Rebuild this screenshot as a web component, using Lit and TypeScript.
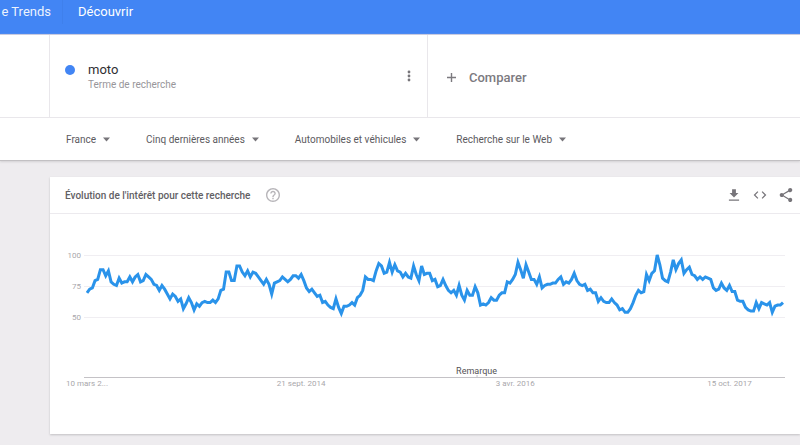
import { LitElement, html, css, svg } from "lit";
import { customElement } from "lit/decorators.js";

// Weekly interest values over five years.
const WEEKS = [
  69, 72, 73, 79, 80, 88, 88, 83, 87, 78, 76, 75, 81, 77, 78, 78, 82, 78, 82, 84,
  78, 79, 84, 82, 80, 76, 75, 71, 75, 72, 68, 64, 68, 66, 62, 64, 56, 60, 65, 61,
  55, 60, 58, 61, 62, 61, 61, 63, 61, 64, 71, 72, 86, 86, 79, 79, 91, 91, 86, 83,
  87, 82, 86, 85, 82, 79, 76, 80, 76, 68, 77, 78, 79, 82, 80, 78, 80, 83, 83, 81,
  84, 79, 73, 70, 72, 69, 66, 67, 61, 62, 59, 57, 56, 64, 57, 52, 58, 58, 59, 61,
  59, 65, 67, 71, 82, 80, 80, 79, 87, 93, 91, 85, 86, 94, 86, 92, 87, 86, 82, 85,
  82, 81, 91, 84, 79, 91, 84, 85, 85, 79, 80, 74, 75, 80, 75, 71, 69, 71, 67, 75,
  67, 63, 71, 67, 67, 74, 69, 59, 60, 59, 61, 65, 63, 63, 67, 69, 69, 78, 77, 80,
  84, 94, 88, 81, 92, 86, 80, 80, 76, 82, 73, 75, 76, 76, 77, 77, 80, 82, 76, 78,
  77, 80, 85, 79, 76, 75, 76, 71, 72, 69, 69, 62, 65, 62, 61, 61, 64, 61, 59, 55,
  56, 53, 53, 56, 61, 67, 71, 69, 70, 84, 79, 85, 87, 100, 92, 81, 79, 78, 86, 96,
  88, 93, 96, 85, 88, 90, 84, 83, 80, 82, 80, 82, 81, 80, 73, 71, 72, 77, 73, 71,
  75, 70, 70, 63, 62, 62, 57, 55, 54, 54, 61, 56, 61, 60, 59, 61, 53, 58, 59, 59,
  61,
];

const LAST = WEEKS.length - 1;
const DATES = [
  { week: 0, label: "10 mars 2..." },
  { week: 80, label: "21 sept. 2014" },
  { week: 160, label: "3 avr. 2016" },
  { week: 240, label: "15 oct. 2017" },
];
const FILTERS = [
  { key: "geo", label: "France" },
  { key: "time", label: "Cinq dernières années" },
  { key: "cat", label: "Automobiles et véhicules" },
  { key: "prop", label: "Recherche sur le Web" },
];

@customElement("trend-chart")
export class TrendChart extends LitElement {
  static styles = css`
    :host {
      display: block;
      padding: 41px 15px 0 34px;
      color: #a9a7ab;
      font-size: 8px;
      line-height: 12px;
    }
    .plot {
      position: relative;
      height: 122px;
      border-bottom: 1px solid #c4c2c6;
    }
    .row {
      position: relative;
      height: 30px;
      border-top: 1px solid #f0eef2;
    }
    .value {
      position: absolute;
      right: 100%;
      top: -6px;
      padding-right: 3px;
    }
    .line {
      position: absolute;
      top: 0;
      left: 3px;
      width: calc(100% - 5px);
      height: 122px;
      overflow: visible;
    }
    .line polyline {
      fill: none;
      stroke: #2a93ea;
      stroke-width: 3;
      vector-effect: non-scaling-stroke;
    }
    .note {
      position: absolute;
      left: 56%;
      bottom: 0;
      transform: translateX(-50%);
      color: #545256;
      font-size: 9px;
    }
    .note::after {
      content: "";
      position: absolute;
      left: 50%;
      bottom: -1px;
      height: 3px;
      border-left: 1px solid #c4c2c6;
    }
    .dates {
      position: relative;
      height: 14px;
      margin: 0 2px 0 3px;
    }
    .date {
      position: absolute;
      top: 0;
      transform: translateX(-50%);
      white-space: nowrap;
    }
  `;

  render() {
    const points = WEEKS.map((v, i) => `${i},${100 - v}`).join(" ");
    return html`
      <div class="plot">
        ${[100, 75, 50].map(
          (v) => html`<div class="row"><span class="value">${v}</span></div>`
        )}
        <svg
          class="line"
          viewBox="0 0 ${LAST} 100"
          preserveAspectRatio="none"
          aria-hidden="true"
        >
          ${svg`<polyline points=${points}></polyline>`}
        </svg>
        <span class="note">Remarque</span>
      </div>
      <div class="dates">
        ${DATES.map(
          (d) =>
            html`<span class="date" style="left:${(d.week / LAST) * 100}%"
              >${d.label}</span
            >`
        )}
      </div>
    `;
  }
}

@customElement("app-root")
export class AppRoot extends LitElement {
  static styles = css`
    :host {
      display: block;
      min-height: 100vh;
      overflow: hidden;
      background: #eeecef;
      font-family: Roboto, "Liberation Sans", sans-serif;
      color: #5c5a5e;
    }
    button {
      display: flex;
      align-items: center;
      margin: 0;
      padding: 0;
      border: 0;
      background: none;
      color: inherit;
      font: inherit;
      cursor: pointer;
    }
    svg {
      display: block;
      fill: currentColor;
    }
    .bar {
      display: flex;
      height: 24px;
      padding-bottom: 10px;
      background: #4285f4;
      color: #fff;
      line-height: 24px;
    }
    .bar a {
      color: inherit;
      text-decoration: none;
    }
    .brand {
      display: flex;
      justify-content: flex-end;
      width: 51px;
      padding-right: 11px;
      border-right: 1px solid #3f80ec;
      font-size: 13px;
      white-space: pre;
      opacity: 0.9;
    }
    .discover {
      margin-left: 15px;
      font-size: 13px;
    }
    .panel {
      background: #fff;
      border-top: 1px solid #c9cbe0;
      border-bottom: 1px solid #c2c0c3;
      box-shadow: 0 1px 2px #d2d0d3;
    }
    .terms {
      display: flex;
      height: 82px;
      padding-left: 49px;
      border-bottom: 1px solid #e9e7eb;
    }
    .term {
      display: flex;
      align-items: center;
      box-sizing: border-box;
      width: 379px;
      padding: 0 14px 0 15px;
      border: solid #e9e7eb;
      border-width: 0 1px;
    }
    .dot {
      width: 10px;
      height: 10px;
      margin: 0 13px 12px 0;
      border-radius: 50%;
      background: #4285f4;
    }
    .words {
      flex: 1;
      padding-top: 2px;
    }
    .name {
      color: #302e32;
      font-size: 13px;
      line-height: 16px;
    }
    .kind {
      color: #98969a;
      font-size: 10px;
      line-height: 14px;
    }
    .options {
      color: #77757a;
    }
    .compare {
      gap: 12px;
      padding: 3px 0 0 18px;
      color: #7c7a7f;
      font-size: 13px;
      font-weight: 500;
    }
    .filters {
      display: flex;
      gap: 36px;
      height: 42px;
      padding-left: 66px;
    }
    .filter {
      gap: 7px;
      font-size: 10px;
      white-space: nowrap;
    }
    .filter svg {
      color: #77757a;
    }
    .card {
      height: 257px;
      margin: 16px 0 10px 50px;
      background: #fff;
      box-shadow: 0 1px 2px #c2c0c3;
    }
    .head {
      display: flex;
      align-items: center;
      height: 36px;
      padding: 0 7px 0 15px;
      border-bottom: 1px solid #eceaee;
    }
    .title {
      margin: 0 16px 0 0;
      color: #626064;
      font-size: 10px;
      font-weight: 500;
    }
    .help {
      color: #b8b6ba;
    }
    .tools {
      display: flex;
      gap: 12px;
      margin-left: auto;
      color: #77757a;
    }
  `;

  render() {
    return html`
      <header class="bar">
        <a class="brand" href="#">e Trends</a>
        <a class="discover" href="#">Découvrir</a>
      </header>
      <section class="panel">
        <div class="terms">
          <div class="term">
            <span class="dot"></span>
            <div class="words">
              <div class="name">moto</div>
              <div class="kind">Terme de recherche</div>
            </div>
            <button class="options" aria-label="Options">
              <svg width="8" height="12" viewBox="0 0 8 12">
                <circle cx="4" cy="2" r="1.4" />
                <circle cx="4" cy="6" r="1.4" />
                <circle cx="4" cy="10" r="1.4" />
              </svg>
            </button>
          </div>
          <button class="compare">
            <svg width="11" height="11" viewBox="0 0 11 11">
              <path d="M4.8 1h1.4v3.8H10v1.4H6.2V10H4.8V6.2H1V4.8h3.8z" />
            </svg>
            Comparer
          </button>
        </div>
        <nav class="filters">
          ${FILTERS.map(
            (f) => html`<button class="filter">
              ${f.label}
              <svg width="7" height="5" viewBox="0 0 7 5">
                <path d="M0 .5h7L3.5 4.5z" />
              </svg>
            </button>`
          )}
        </nav>
      </section>
      <section class="card">
        <div class="head">
          <h2 class="title">Évolution de l'intérêt pour cette recherche</h2>
          <button class="help" aria-label="Aide">
            <svg width="14" height="14" viewBox="2 2 20 20">
              <path
                d="M11 18h2v-2h-2v2zm1-16C6.48 2 2 6.48 2 12s4.48 10 10 10 10-4.48 10-10S17.52 2 12 2zm0 18c-4.41 0-8-3.59-8-8s3.59-8 8-8 8 3.59 8 8-3.59 8-8 8zm0-14c-2.21 0-4 1.79-4 4h2c0-1.1.9-2 2-2s2 .9 2 2c0 2-3 1.75-3 5h2c0-2.25 3-2.5 3-5 0-2.21-1.79-4-4-4z"
              />
            </svg>
          </button>
          <div class="tools">
            <button aria-label="Télécharger">
              <svg width="14" height="14" viewBox="1 1 22 22">
                <path d="M19 9h-4V3H9v6H5l7 7 7-7zM4 19v2h16v-2H4z" />
              </svg>
            </button>
            <button aria-label="Intégrer">
              <svg width="14" height="14" viewBox="1 1 22 22">
                <path
                  d="M9.4 16.6L4.8 12l4.6-4.6L8 6l-6 6 6 6 1.4-1.4zm5.2 0l4.6-4.6-4.6-4.6L16 6l6 6-6 6-1.4-1.4z"
                />
              </svg>
            </button>
            <button aria-label="Partager">
              <svg width="14" height="14" viewBox="2 2 20 20">
                <path
                  d="M18 16.08c-.76 0-1.44.3-1.96.77L8.91 12.7c.05-.23.09-.46.09-.7s-.04-.47-.09-.7l7.05-4.11c.54.5 1.25.81 2.04.81 1.66 0 3-1.34 3-3s-1.34-3-3-3-3 1.34-3 3c0 .24.04.47.09.7L8.04 9.81C7.5 9.31 6.79 9 6 9c-1.66 0-3 1.34-3 3s1.34 3 3 3c.79 0 1.5-.31 2.04-.81l7.12 4.16c-.05.21-.08.43-.08.65 0 1.61 1.31 2.92 2.92 2.92s2.92-1.31 2.92-2.92-1.31-2.92-2.92-2.92z"
                />
              </svg>
            </button>
          </div>
        </div>
        <trend-chart></trend-chart>
      </section>
    `;
  }
}
